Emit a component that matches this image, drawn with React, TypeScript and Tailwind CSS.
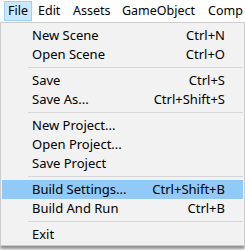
import React from 'react';

type Item = { label: string; shortcut?: string; active?: boolean } | 'sep';

const items: Item[] = [
  { label: 'New Scene', shortcut: 'Ctrl+N' },
  { label: 'Open Scene', shortcut: 'Ctrl+O' },
  'sep',
  { label: 'Save', shortcut: 'Ctrl+S' },
  { label: 'Save As...', shortcut: 'Ctrl+Shift+S' },
  'sep',
  { label: 'New Project...' },
  { label: 'Open Project...' },
  { label: 'Save Project' },
  'sep',
  { label: 'Build Settings...', shortcut: 'Ctrl+Shift+B', active: true },
  { label: 'Build And Run', shortcut: 'Ctrl+B' },
  'sep',
  { label: 'Exit' },
];

export default function App() {
  return (
    <div className="w-[245px] h-[250px] bg-white overflow-hidden font-['Noto_Sans',sans-serif] text-[13px] leading-none text-black">
      {/* Menu bar */}
      <div className="flex items-center h-[22px] whitespace-nowrap text-[12.5px]">
        <div className="ml-[4px] w-[28px] h-[20px] flex items-center justify-center border border-[#99d1ff] bg-[#cce8ff]">File</div>
        <div className="w-[35px] pl-[6px] shrink-0">Edit</div>
        <div className="w-[49px] pl-[6px] shrink-0">Assets</div>
        <div className="w-[86px] pl-[6px] shrink-0">GameObject</div>
        <div className="pl-[6px]">Comp</div>
      </div>

      {/* Dropdown */}
      <div className="bg-[#f2f2f2] border border-[#cccccc] pt-[3px] pb-[1px] shadow-[0_3px_3px_rgba(0,0,0,0.45)]">
        {items.map((it, i) =>
          it === 'sep' ? (
            <div key={i} className="h-[7px] flex items-center ml-[27px] mr-[1px]">
              <div className="w-full border-t border-[#d7d7d7]" />
            </div>
          ) : (
            <div
              key={i}
              className={`h-[19px] mx-[1px] flex items-center justify-between pl-[30px] pr-[18px] ${it.active ? 'bg-[#91c9f7]' : ''}`}
            >
              <span>{it.label}</span>
              {it.shortcut && <span>{it.shortcut}</span>}
            </div>
          )
        )}
      </div>
    </div>
  );
}
